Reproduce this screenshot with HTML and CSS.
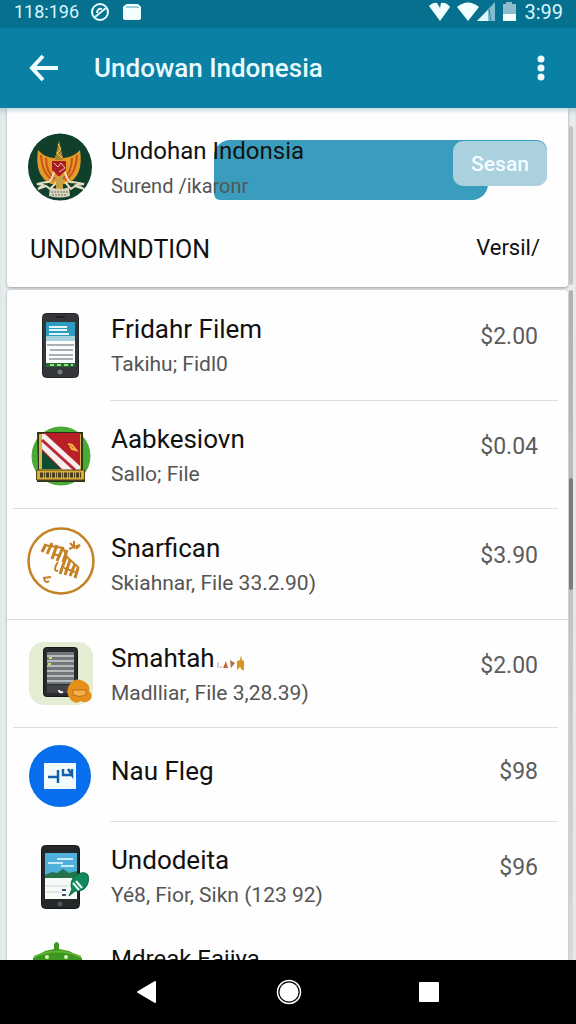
FILE: index.html
```html
<!DOCTYPE html>
<html lang="id">
<head>
<meta charset="utf-8">
<meta name="viewport" content="width=device-width, initial-scale=1">
<title>Undowan Indonesia</title>
<link rel="stylesheet" href="styles.css">
</head>
<body>
<div class="screen">
  <div class="status">
    <span class="status-time">118:196</span>
    <svg class="status-sync" viewBox="0 0 20 20" width="20" height="20" fill="none" stroke="#e4fbff" stroke-width="2"><circle cx="10" cy="10" r="8"/><path d="M5 15 16 6M7 11c0-3 2-5 5-4"/></svg>
    <svg viewBox="0 0 20 18" width="20" height="18"><path fill="#f4ffff" d="M3 2 5 1h11l3 3v11q0 2-2 2H3q-2 0-2-2V4z"/><path d="M4 4h11l2 1" fill="none" stroke="#4b9db5"/></svg>
    <svg class="status-right" viewBox="0 0 88 22" width="88" height="22">
      <path fill="#f2ffff" d="M0 5Q4 1 8 2l3 5 1-5q5-1 9 4L11 20z"/>
      <path fill="#f2ffff" d="M28 6q11-9 22 0L39 20z"/>
      <path fill="#80bdd0" d="M66 1v19H48z"/><path fill="#dff6fb" d="M59 9v11H48z"/><path d="m60 8 2 12" stroke="#3586a2"/>
      <path fill="#8dbccd" d="M74 3h3V1h6v2h4v17H74z"/><path fill="#f2ffff" d="M74 13h13v7H74z"/>
    </svg>
    <span class="status-time">3:99</span>
  </div>

  <header class="appbar">
    <button class="icon-button" aria-label="Kembali"><svg viewBox="0 0 30 28" width="30" height="28" fill="none" stroke="#effdff" stroke-width="4"><path d="M14 2 3 14l11 12M3 14h26"/></svg></button>
    <h1 class="appbar-title">Undowan Indonesia</h1>
    <button class="icon-button menu" aria-label="Menu"><svg viewBox="0 0 8 26" width="8" height="26" fill="#effdff"><circle cx="4" cy="4" r="3.500"/><circle cx="4" cy="13" r="3.500"/><circle cx="4" cy="22" r="3.500"/></svg></button>
  </header>

  <main class="content">
    <section class="card intro">
      <div class="profile">
        <span class="banner"></span>
        <svg class="picture" viewBox="0 0 68 68" width="68" height="68">
          <ellipse cx="33" cy="34" rx="32" ry="33.500" fill="#103f2b"/>
          <path d="M11 17q7 8 17 8l4-15 4 15q11-1 17-8 4 26-13 34H24Q7 43 11 17z" fill="#e39a27"/>
          <path d="M14 22q1 19 12 25M50 22q-1 19-12 25M19 25q0 14 9 21M45 25q0 14-9 21" fill="none" stroke="#cc521d" stroke-width="2"/>
          <path d="m32 7 4 20h-8z" fill="#a9852c"/><path d="m31 11 3 5-4 4 5 5" fill="none" stroke="#f0cc60"/>
          <path d="M25 28h14v9l-7 7-7-7z" fill="#a91e25"/><path d="m27 30 4 4 3-4 4 5-6 4" fill="none" stroke="#f2c2ae"/>
          <path d="M27 39q-3 12-8 10l-9 2 6 1-5 4 8-3 4 3 7-7M38 39q3 12 8 10l11 2-7 1 7 4-9-3-4 3-6-7" fill="none" stroke="#e6dfc5" stroke-width="2"/>
          <path d="M29 43h7v14h-7z" fill="#c8a044"/><path d="M23 54q10 4 19 0l1 9q-10 3-21 0z" fill="#d8d3bd"/><path d="M24 59h17M25 62h15" stroke="#756b59" stroke-dasharray="2 1"/>
        </svg>
        <div class="labels"><h2 class="title small">Undohan Indonsia</h2><p class="sub small-sub">Surend /ikaronr</p></div>
        <button class="action">Sesan</button>
      </div>
      <div class="section-head"><h2 class="section-title">UNDOMNDTION</h2><span class="version">Versil/</span></div>
    </section>

    <ul class="card list">
      <li>
        <div class="row roomy">
          <svg class="picture" viewBox="0 0 68 68" width="68" height="68">
            <rect x="15.500" y="1.500" width="36" height="64" rx="4" fill="#34363b" stroke="#222428"/>
            <path fill="#fafcfc" d="M19 10h29v45H19z"/><path fill="#2c9cc0" d="M19 10h29v14H19z"/><path fill="#a7d3df" d="M19 24h29v5H19z"/>
            <path d="M22 15h18M22 18h18M22 22h20" stroke="#e2f6fb" stroke-width="2"/><path d="M20 33h27M23 38h23M22 43h24M22 47h24" stroke="#8c979b" stroke-width="1.500"/>
            <path fill="#216c38" d="M19 51h29v4H19z"/><path d="M23 53h23" stroke="#a4e069" stroke-width="2" stroke-dasharray="4 3"/><circle cx="33" cy="60" r="2.500" fill="#777a7f"/><path d="M29 5h9" stroke="#111"/>
          </svg>
          <div class="labels"><h3 class="title">Fridahr Filem</h3><p class="sub">Takihu; Fidl0</p></div><span class="price">$2.00</span>
        </div><hr class="divider inset">
      </li>
      <li>
        <div class="row">
          <svg class="picture" viewBox="0 0 68 68" width="68" height="68">
            <circle cx="34" cy="34" r="29.500" fill="#4aaa36"/><path fill="#31321d" d="M10 10h46v38l2 1v11H10V49l1-1z"/>
            <path fill="#d8b449" d="M12 12h42v36H12z"/><path fill="#b91f27" d="M15 11h38v36H15z"/><path fill="#0d4b32" d="M15 29v18h19z"/>
            <path d="M15 12h3l35 32v4H36L15 27z" fill="#f7eeed"/><path d="m15 18 33 30" stroke="#b92834" stroke-width="3"/><path d="m41 22 4 1 4 5-4-1-2-3" fill="none" stroke="#efb542" stroke-width="2"/>
            <path fill="#d7ad35" stroke="#51431c" d="M9.500 48h48v10h-48z"/><path d="M13 53h41" stroke="#493d1c" stroke-width="5" stroke-dasharray="3 1 1 1"/>
          </svg>
          <div class="labels"><h3 class="title">Aabkesiovn</h3><p class="sub">Sallo; File</p></div><span class="price">$0.04</span>
        </div><hr class="divider">
      </li>
      <li>
        <div class="row roomy">
          <svg class="picture" viewBox="0 4 68 68" width="68" height="76" fill="none" stroke="#c58224">
            <circle cx="34" cy="34" r="32.500" stroke-width="2.500"/>
            <path stroke-width="3" d="m15 25 4-8M20 27l5-11M25 32l5-14M30 34l6-14M36 35l4-12M33 47l6-17M38 48l5-15M43 49l5-12M48 51l3-10"/>
            <path stroke-width="2" d="M17 18l19 3 4 9 12 11M31 35q-6 9 0 9M26 27l8 2M37 41l11 4"/>
            <path stroke-width="2" d="m43 16 4 4v-6m0 6 6-2-4 4m-2-2-5 2M16 51l8-1m-7 1q1 6 5 3"/>
          </svg>
          <div class="labels"><h3 class="title">Snarfican</h3><p class="sub">Skiahnar, File 33.2.90)</p></div><span class="price">$3.90</span>
        </div><hr class="divider wide">
      </li>
      <li>
        <div class="row">
          <svg class="picture" viewBox="0 0 68 68" width="68" height="68">
            <rect x="2" y="1" width="64" height="63" rx="15" fill="#e5ecd4"/><rect x="16.500" y="6.500" width="34" height="49" rx="3" fill="#282a2d" stroke="#151719"/>
            <path fill="#737779" d="M20 11h27v32H20z"/><path d="M20 15h27M20 20h27M20 25h27M20 30h27M20 35h27M20 40h27" stroke="#b7babb" stroke-width="2"/><path d="M22 17h3M21 23h3" stroke="#b8e968" stroke-width="2"/><path d="M20 44h27v8H20z" fill="#414346"/><path d="M32 49q0 3 4 2" fill="none" stroke="#fff" stroke-width="2"/>
            <path d="M43 43q6-8 15-2 6 4 4 9 5 4 1 9-5 4-9 1-5 4-10-1-7-8-1-16z" fill="#e58f1b"/><path d="M46 49h13v5q-7 3-13 0z" fill="#f6b04d" stroke="#bd6d14"/>
          </svg>
          <div class="labels"><h3 class="title">Smahtah<svg class="mark" viewBox="0 0 28 18" width="28" height="18"><path d="M1 9v6m2-1h2" fill="none" stroke="#b9a08c"/><path d="m9 8 2 7H6zM13 7l5 3-4 5z" fill="#b86b43"/><path d="m20 8 3-1 1-5 1 5 2 1v9h-2l-2-3-3 3z" fill="#db9422"/></svg></h3><p class="sub">Madlliar, File 3,28.39)</p></div><span class="price">$2.00</span>
        </div><hr class="divider">
      </li>
      <li>
        <div class="row compact">
          <svg class="picture" viewBox="0 0 68 68" width="68" height="68"><circle cx="33" cy="34" r="31" fill="#086eed"/><path fill="#f1faff" d="M17 21h32v26H17z"/><path d="M21 35h11M31 28v13M36 27v6h3M41 27l4 6v-6M36 33h10" fill="none" stroke="#1462a5" stroke-width="2.500"/></svg>
          <div class="labels"><h3 class="title">Nau Fleg</h3></div><span class="price">$98</span>
        </div><hr class="divider inset">
      </li>
      <li>
        <div class="row">
          <svg class="picture" viewBox="0 0 68 68" width="68" height="68">
            <rect x="14.500" y="2.500" width="38" height="63" rx="4" fill="#25282b" stroke="#15171a"/><path fill="#f7fbf8" d="M18 10h32v46H18z"/><path fill="#4eb1dc" d="M18 10h32v22H18z"/><path d="M21 20h15M30 16h16M34 23h13" stroke="#c9edf6" stroke-width="2"/><path fill="#24714a" d="m18 32 7-3 5 1 6-4 6 4 8-2v7H18z"/><path d="M19 43h22M19 49h16" stroke="#ccd3cf"/><path d="M35 47h4m-4 5h4" stroke="#3d536a" stroke-width="2"/><circle cx="33" cy="61" r="2.500" fill="#515558"/>
            <path d="M44 43q0-9 7-12 7-3 10 1 2 9-4 14-4 3-9 2l-6 5 3-7z" fill="#14885d" stroke="#0a6844"/><path d="m46 40 6 7m-3-9 6 7" stroke="#ecfff7" stroke-width="2"/>
          </svg>
          <div class="labels"><h3 class="title">Undodeita</h3><p class="sub">Y&#233;8, Fior, Sikn (123 92)</p></div><span class="price">$96</span>
        </div>
      </li>
      <li>
        <div class="row last">
          <svg class="picture" viewBox="0 0 68 68" width="68" height="68"><path d="m6 17 12-7 9-2V3q3-4 5 0v5l10 2 13 7v35H6z" fill="#3d961f"/><path d="M7 16q23-11 47 0" fill="none" stroke="#60b62f" stroke-width="2"/><circle cx="20" cy="16" r="2" fill="#d7f3bb"/><circle cx="39" cy="16" r="2" fill="#d7f3bb"/></svg>
          <div class="labels"><h3 class="title small">Mdreak Eajiya</h3></div>
        </div>
      </li>
    </ul>
    <span class="scroll-track upper"></span>
    <span class="scroll-track lower"></span>
    <span class="scroll-thumb"></span>
  </main>

  <nav class="navbar">
    <button class="icon-button" aria-label="Kembali"><svg viewBox="0 0 24 26" width="24" height="26"><path d="M3 13 20 3v20z" fill="#fff" stroke="#fff" stroke-width="2" stroke-linejoin="round"/></svg></button>
    <button class="icon-button" aria-label="Beranda"><svg viewBox="0 0 26 26" width="26" height="26"><circle cx="13" cy="13" r="11.500" fill="none" stroke="#fff" stroke-width="1.500"/><circle cx="13" cy="13" r="9.500" fill="#fff"/></svg></button>
    <button class="icon-button" aria-label="Terbaru"><svg viewBox="0 0 20 20" width="20" height="20"><rect width="20" height="20" rx="1" fill="#fff"/></svg></button>
  </nav>
</div>
</body>
</html>
```
FILE: styles.css
```css
* { box-sizing: border-box; }

body {
  margin: 0;
  font-family: Roboto, "Noto Sans", sans-serif;
  color: #111;
  background: #e9edef;
}

h1, h2, h3, p, ul { margin: 0; padding: 0; font-weight: 400; }
li { list-style: none; }
svg { display: block; flex: none; }
button { font: inherit; border: 0; padding: 0; cursor: pointer; }

.screen { display: flex; flex-direction: column; height: 100vh; overflow: hidden; }

.status {
  display: flex;
  flex: none;
  align-items: center;
  height: 28px;
  padding: 0 13px 4px 14px;
  background: #06708f;
}
.status-time { color: #d9f6fc; font-size: 20px; line-height: 24px; }
.status-time:first-child { width: 64px; font-size: 18px; }
.status-sync { margin: 0 12px; }
.status-right { margin-left: auto; margin-right: 7px; }

.appbar {
  display: flex;
  flex: none;
  align-items: center;
  height: 80px;
  padding: 0 31px 0 29px;
  background: #0b80a5;
}
.appbar-title { flex: 1; margin-left: 35px; color: #e9fbff; font-size: 26px; font-weight: 500; line-height: 36px; }
.icon-button { display: flex; background: none; }

.content { position: relative; flex: 1; min-height: 0; overflow: hidden; padding: 0 8px 0 7px; box-shadow: inset 0 6px 6px -3px #b5c8ce; }

.card { background: #fefefe; border-radius: 4px; box-shadow: 0 1px 3px #999; }
.intro {
  padding: 25px 0 19px;
  border-radius: 0 0 4px 4px;
  background: linear-gradient(#c9dce2, #fefefe 6px);
}
.list { margin-top: 3px; }

.profile { position: relative; display: flex; gap: 16px; padding: 0 21px 0 20px; }
.banner {
  position: absolute;
  top: 7px;
  right: 80px;
  left: 207px;
  height: 60px;
  border-radius: 16px 0 16px 6px;
  background: #3b9dbe;
}
.labels { position: relative; flex: 1; min-width: 0; }
.title { font-size: 26px; line-height: 36px; white-space: nowrap; }
.title.small { font-size: 24px; }
.sub { color: #555; font-size: 21px; line-height: 34px; white-space: nowrap; }
.small-sub { font-size: 20px; }
.action {
  position: relative;
  width: 94px;
  height: 45px;
  margin-top: 8px;
  border-radius: 10px;
  color: #f4fdff;
  background: #abd1df;
  box-shadow: 0 -1px 0 #3b9dbe;
  font-size: 21px;
  font-weight: 500;
}

.section-head { display: flex; justify-content: space-between; margin-top: 29px; padding: 0 28px 0 23px; }
.section-title { font-size: 25px; line-height: 36px; }
.version { font-size: 22px; line-height: 32px; }

.row { display: flex; align-items: center; gap: 16px; min-height: 107px; padding: 2px 30px 0 20px; }
.roomy { min-height: 110px; }
.compact { min-height: 93px; }
.last { align-items: flex-start; padding-top: 12px; }
.price { margin-bottom: 18px; color: #5c5c5c; font-size: 23px; line-height: 32px; }
.compact .price { margin-bottom: 8px; }
.compact .labels { padding-bottom: 10px; }
.mark { display: inline-block; margin-left: 2px; vertical-align: -4px; }

.divider { height: 1px; margin: 0 10px 0 6px; border: 0; background: #dedede; }
.divider.inset { margin-left: 103px; }
.divider.wide { margin: 0; }

.scroll-track { position: absolute; right: 3px; width: 4px; border-radius: 2px; background: #c4c4c4; }
.upper { top: 18px; height: 159px; }
.lower { top: 182px; bottom: 0; background: linear-gradient(#b0b0b0, #d8d8d8); }
.scroll-thumb { position: absolute; top: 370px; right: 3px; width: 4px; height: 112px; border-radius: 2px; background: #7c7c7c; }

.navbar { display: flex; flex: none; align-items: center; justify-content: space-between; height: 64px; padding: 0 137px 0 135px; background: #000; }
```
